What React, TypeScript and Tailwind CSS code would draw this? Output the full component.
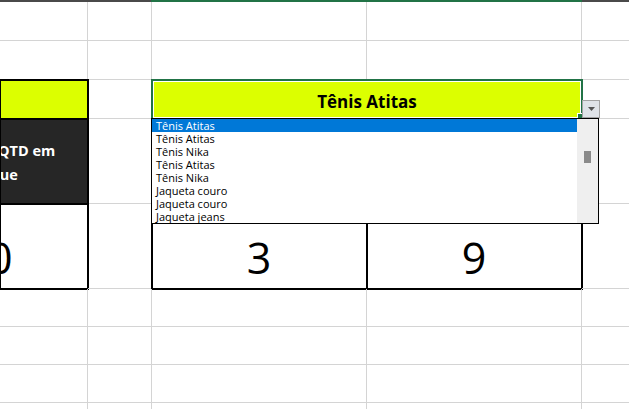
import React from "react";

const items = [
  "Tênis Atitas",
  "Tênis Atitas",
  "Tênis Nika",
  "Tênis Atitas",
  "Tênis Nika",
  "Jaqueta couro",
  "Jaqueta couro",
  "Jaqueta jeans",
];

function GridRow({ h }: { h: string }) {
  return (
    <div className={`flex ${h}`}>
      <div className="w-[88px] shrink-0 border-r border-b border-[#d4d4d4]" />
      <div className="w-[64px] shrink-0 border-r border-b border-[#d4d4d4]" />
      <div className="w-[215px] shrink-0 border-r border-b border-[#d4d4d4]" />
      <div className="w-[215px] shrink-0 border-r border-b border-[#d4d4d4]" />
      <div className="flex-1 border-b border-[#d4d4d4]" />
    </div>
  );
}

export default function App() {
  return (
    <div className="relative w-[629px] h-[409px] overflow-hidden bg-white font-['Open_Sans',sans-serif] text-black">
      {/* column header bottom edge */}
      <div className="flex h-[2px]">
        <div className="w-[151px] bg-[#4a4a4a]" />
        <div className="w-[431px] bg-[#217346]" />
        <div className="flex-1 bg-[#4a4a4a]" />
      </div>

      <GridRow h="h-[39px]" />
      <GridRow h="h-[39px]" />

      {/* row 3 */}
      <div className="flex h-[39px]">
        <div className="w-[88px] shrink-0 border-r border-b border-[#d4d4d4] bg-[#dcff00] outline-2 outline-black -outline-offset-1" />
        <div className="w-[64px] shrink-0 border-r border-b border-[#d4d4d4]" />
        <div className="w-[430px] shrink-0 bg-[#dcff00] outline-2 outline-[#217346] -outline-offset-1 shadow-[inset_0_0_0_2px_#ffffff] flex items-end justify-center pb-[9px]">
          <span className="text-[17px] leading-none font-bold">Tênis Atitas</span>
        </div>
        <div className="flex-1 border-b border-[#d4d4d4]" />
      </div>

      {/* row 4 */}
      <div className="flex h-[85px]">
        <div className="w-[88px] shrink-0 overflow-hidden bg-[#262626] outline-2 outline-black -outline-offset-1 flex flex-col justify-center pt-[3px] text-white text-[14.5px] leading-[24px] font-bold">
          <div className="whitespace-nowrap ml-[-2px]">QTD em</div>
          <div className="whitespace-nowrap ml-[-40px]">Estoque</div>
        </div>
        <div className="w-[64px] shrink-0 border-r border-b border-[#d4d4d4]" />
        <div className="w-[215px] shrink-0 bg-[#262626]" />
        <div className="w-[215px] shrink-0 bg-[#262626]" />
        <div className="flex-1 border-b border-[#d4d4d4]" />
      </div>

      {/* row 5 */}
      <div className="flex h-[85px]">
        <div className="w-[88px] shrink-0 overflow-hidden border-r border-b border-[#d4d4d4] outline-2 outline-black -outline-offset-1 flex items-end pb-[9px]">
          <span className="ml-[-12px] text-[43px] leading-none">0</span>
        </div>
        <div className="w-[64px] shrink-0 border-r border-b border-[#d4d4d4]" />
        <div className="w-[215px] shrink-0 border-r border-b border-[#d4d4d4] outline-2 outline-black -outline-offset-1 flex items-end justify-center pb-[9px]">
          <span className="text-[43px] leading-none">3</span>
        </div>
        <div className="w-[215px] shrink-0 border-r border-b border-[#d4d4d4] outline-2 outline-black -outline-offset-1 flex items-end justify-center pb-[9px]">
          <span className="text-[43px] leading-none">9</span>
        </div>
        <div className="flex-1 border-b border-[#d4d4d4]" />
      </div>

      <GridRow h="h-[38px]" />
      <GridRow h="h-[38px]" />
      <GridRow h="h-[38px]" />
      <GridRow h="h-[38px]" />

      {/* fill handle */}
      <div className="absolute left-[577px] top-[113px] w-[6px] h-[6px] bg-[#217346] border border-white z-10" />

      {/* dropdown arrow button */}
      <div className="absolute left-[582px] top-[100px] w-[18px] h-[18px] bg-[#dfe3e8] border border-[#a3a3a3] flex items-center justify-center z-10">
        <svg width="7" height="4" viewBox="0 0 7 4">
          <path d="M0 0H7L3.5 4Z" fill="#555555" />
        </svg>
      </div>

      {/* dropdown list */}
      <div className="absolute left-[151px] top-[118px] w-[448px] h-[106px] border border-black bg-white flex z-20">
        <div className="flex-1 flex flex-col">
          {items.map((t, i) => (
            <div
              key={i}
              className={`h-[13px] pl-[4px] text-[11px] leading-[13px] whitespace-nowrap ${
                i === 0 ? "bg-[#0078d7] text-white" : "text-black"
              }`}
            >
              {t}
            </div>
          ))}
        </div>
        <div className="w-[21px] bg-[#efefef] pt-[32px] pl-[7px]">
          <div className="w-[7px] h-[12px] bg-[#8a8a8a]" />
        </div>
      </div>
    </div>
  );
}
